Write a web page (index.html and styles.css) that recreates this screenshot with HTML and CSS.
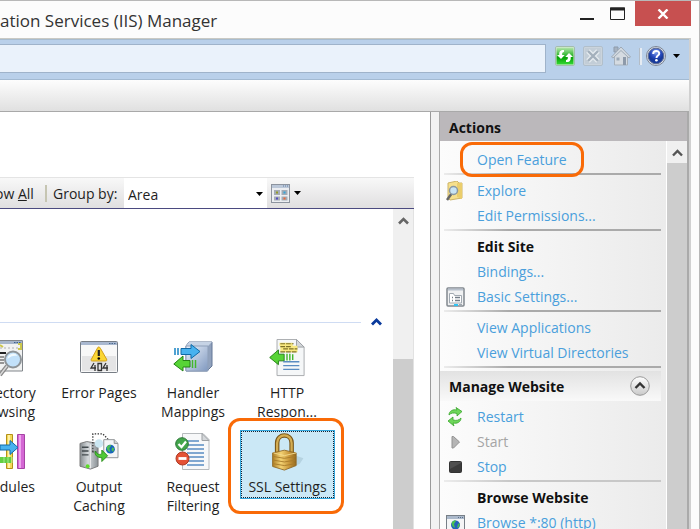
FILE: index.html
```html
<!DOCTYPE html>
<html lang="en">
<head>
<meta charset="utf-8">
<title>IIS Manager</title>
<link rel="stylesheet" href="styles.css">
</head>
<body>
<div class="window">
  <header class="titlebar">
    <h1 class="title">ation Services (IIS) Manager</h1>
    <div class="window-buttons">
      <button class="win-btn" aria-label="Minimize"><svg width="16" height="14" viewBox="0 0 16 14"><path d="M1 12h14" stroke="#222" stroke-width="2"/></svg></button>
      <button class="win-btn" aria-label="Maximize"><svg width="16" height="14" viewBox="0 0 16 14"><path d="M.5 1h14v11.500h-14z" fill="none" stroke="#222"/><path d="M0 2h15" stroke="#222" stroke-width="3"/></svg></button>
      <button class="win-btn close" aria-label="Close"><svg width="12" height="10" viewBox="0 0 12 10"><path d="M1.500 .5l9 9M10.500 .5l-9 9" stroke="#fff" stroke-width="2.400"/></svg></button>
    </div>
  </header>

  <div class="frame">
    <div class="navbar">
      <input class="address" type="text" aria-label="Address">
      <div class="nav-icons">
        <button class="icon-btn" aria-label="Refresh"><svg width="20" height="20" viewBox="0 0 20 20"><defs><linearGradient id="gr" x2="0" y2="1"><stop stop-color="#b5e6ad"/><stop offset=".45" stop-color="#35b833"/><stop offset=".6" stop-color="#06a306"/><stop offset="1" stop-color="#35d935"/></linearGradient></defs><rect x=".5" y=".5" width="19" height="19" rx="1.500" fill="#dcebdc" stroke="#a3bcae"/><rect x="1.500" y="1.500" width="17" height="17" fill="url(#gr)"/><path d="M9 4C5 3.500 4 6 4.300 9H2l4 4 3.700-4H7.200C7 7 7.500 6.200 9 6zM11 16c4 .5 5-2 4.700-5H18l-4-4-3.700 4h2.500c.2 2-.3 2.800-1.800 3z" fill="#fff"/></svg></button>
        <button class="icon-btn" aria-label="Stop loading" disabled><svg width="20" height="20" viewBox="0 0 20 20"><rect x=".5" y=".5" width="19" height="19" rx="1.500" fill="#cbd4dc" stroke="#b1bfcb"/><path d="M2 2h16v16H2z" fill="#c2cdd7"/><path d="M5 5l10 10M15 5L5 15" stroke="#e4eaef" stroke-width="5"/><path d="M5 5l10 10M15 5L5 15" stroke="#a3b0bc" stroke-width="2.400"/></svg></button>
        <button class="icon-btn" aria-label="Home"><svg width="20" height="20" viewBox="0 0 20 20"><path d="M3 1h4v5H3z" fill="#a7b3c1" stroke="#8d9bab"/><path d="M3.500 10v9h13v-9L10 3z" fill="#d5dbe1" stroke="#a7b1bb"/><path d="M10 1L.5 11l1.500 1 8-7.500L18 12l1.500-1z" fill="#d3dae1" stroke="#9faab6"/><path d="M12 11h3v8h-3z" fill="#8d9aaa"/><path d="M5.500 11.500h3v3h-3z" fill="#9ba8b7"/></svg></button>
        <span class="nav-sep"></span>
        <button class="help-btn" aria-label="Help"><svg width="32" height="20" viewBox="0 0 32 20"><defs><radialGradient id="hb" cx=".5" cy=".25"><stop stop-color="#86a5f0"/><stop offset=".7" stop-color="#2749bd"/><stop offset="1" stop-color="#173a9c"/></radialGradient></defs><circle cx="10" cy="10" r="9.500" fill="#d8dee8" stroke="#7c8593"/><circle cx="10" cy="10" r="7.800" fill="url(#hb)" stroke="#5d6c93"/><path d="M7.200 8c0-4 6-4 6-.6 0 2.200-2.700 2.200-2.700 4.600" fill="none" stroke="#fff" stroke-width="2"/><circle cx="10.400" cy="14.300" r="1.300" fill="#fff"/></svg><svg width="7" height="4" viewBox="0 0 7 4"><path d="M0 0h7L3.500 4z" fill="#000"/></svg></button>
      </div>
    </div>
    <div class="strip"></div>

    <div class="panes">
      <main class="features">
        <div class="view-bar">
          <button class="show-all">ow <u>A</u>ll</button>
          <span class="bar-sep"></span>
          <label class="group-label" for="group-by">Group by:</label>
          <div class="select-wrap">
            <select class="group-select" id="group-by"><option>Area</option></select>
            <svg class="select-arrow" width="7" height="4" viewBox="0 0 7 4"><path d="M0 0h7L3.500 4z" fill="#000"/></svg>
          </div>
          <button class="view-btn" aria-label="View"><svg width="19" height="19" viewBox="0 0 19 19"><rect x=".5" y=".5" width="18" height="18" fill="#eceef2" stroke="#8d949f"/><path d="M1 1h17v3H1z" fill="#bcc8d9"/><path d="M12 2h5" stroke="#5c7da3" stroke-dasharray="1 1"/><path d="M3 6h6v5H3zM10.500 6h6v5h-6zM3 12.500h6v4H3zM10.500 12.500h6v4h-6z" fill="#a4abb5"/><path d="M5 7.500h2v2H5z" fill="#939c28"/><path d="M12.500 7.500h2v2h-2z" fill="#35a6dc"/><path d="M5 13.500h2v2H5z" fill="#544cc4"/><path d="M12.500 13.500h2v2h-2z" fill="#f06835"/></svg><svg width="7" height="4" viewBox="0 0 7 4"><path d="M0 0h7L3.500 4z" fill="#000"/></svg></button>
        </div>
        <div class="list-area">
          <div class="list">
            <div class="group-head">
              <span class="group-line"></span>
              <button class="collapse" aria-label="Collapse group"><svg width="11" height="8" viewBox="0 0 11 8"><path d="M1 6.500L5.500 2 10 6.500" fill="none" stroke="#0a3a9c" stroke-width="2.800"/></svg></button>
            </div>
            <div class="grid">
              <a class="tile cut" href="#"><svg width="24" height="38" viewBox="8 0 24 38"><path d="M0 1.500h30.500V32H0z" fill="#f1f2f2" stroke="#81868b"/><path d="M0 2h30v3H0z" fill="#a6b5ca"/><path d="M22 3.500h7" stroke="#385d8b" stroke-dasharray="1.500 1"/><path d="M8 6l3 2M26 5h3v5h-3" stroke="#ccc74c" stroke-width="2" fill="none"/><path d="M8 9h20" stroke="#b0b0b0" stroke-dasharray="2 2"/><path d="M8 14h6" stroke="#222" stroke-width="2"/><path d="M8 18h4M8 21h4M8 24h4" stroke="#777" stroke-width="1.500"/><path d="M15 27l-7 9" stroke="#888" stroke-width="4"/><path d="M15 27l-7 9" stroke="#d9d9d9" stroke-width="1.500"/><circle cx="21" cy="20.500" r="8" fill="#c2e1fa" stroke="#8e9498" stroke-width="2"/><path d="M15.500 20a5.500 5.500 0 0 1 10-3c-3-1-7 0-10 3z" fill="#f1faff"/></svg><span>ectory<br>wsing</span></a>
              <a class="tile" href="#"><svg width="38" height="38" viewBox="0 0 38 38"><rect x=".5" y="2.500" width="37" height="31" rx="1" fill="#f8f8f8" stroke="#777d85"/><path d="M1 3h36v3H1z" fill="#a9b8d0"/><path d="M29 4.500h7" stroke="#49688d" stroke-dasharray="1.500 1"/><path d="M2 17h34v15H2z" fill="#e4e4e5"/><path d="M18.500 8c1 0 1.500.5 2 1.500l6 10.500c.8 1.500 0 2-1 2h-13c-1.500 0-2-.8-1-2l6-11c.3-.6.6-1 1-1z" fill="#fbd633" stroke="#d09e1b"/><path d="M18.800 11v6" stroke="#222" stroke-width="2.200"/><circle cx="18.800" cy="19.500" r="1.300"/><path d="M14 24l-3 5h5m-1-3v6M18 24.500h3.500v7H18zM26 24l-3 5h5m-1-3v6" fill="none" stroke="#333" stroke-width="1.300"/></svg><span>Error Pages</span></a>
              <a class="tile" href="#"><svg width="40" height="38" viewBox="0 0 40 38"><defs><linearGradient id="cube" x2="1" y2="1"><stop stop-color="#e9f0fa"/><stop offset="1" stop-color="#7f98bf"/></linearGradient></defs><path d="M13 7l3-4h23v24l-5 5H13z" fill="#91a2bd" stroke="#627696"/><path d="M13 7l3-4h23l-4 4z" fill="#c6d3e5"/><path d="M13 7h22v25H13z" fill="url(#cube)" stroke="#8e9fb9"/><path d="M2 9v7M5 9v7" stroke="#1683c4" stroke-width="1.500"/><path d="M8 9.500h10V5.500l9 7-9 7v-4H8z" fill="#48b2ef" stroke="#126aa7"/><path d="M17 21.500h-7v-4.500L.8 25l9.200 7v-4h7z" fill="#57d436" stroke="#258217"/><path d="M19.500 21v8M22.500 21v8" stroke="#43b72d" stroke-width="1.500"/></svg><span>Handler<br>Mappings</span></a>
              <a class="tile" href="#"><svg width="38" height="40" viewBox="0 0 38 40"><path d="M8.500 .5H29l8 8v30H8.500z" fill="#f5f7f8" stroke="#a7aaad"/><path d="M29 .5v8h8z" fill="#d3d6d9" stroke="#9b9fa3"/><path d="M11 4h14v3H11zM12 7h18v7H12z" fill="#f8e980"/><path d="M12 5h14M12 8h12M15 10.500h15M12 13.500h18" stroke="#7e7127" stroke-width="1.300" stroke-dasharray="5 1"/><path d="M16 16h-6v-4.500L.8 19.500 10 27v-4h6z" fill="#57d436" stroke="#258217"/><path d="M19 15.500v7M22 15.500v7M25 16v6" stroke="#43b72d" stroke-width="1.500"/><path d="M15 24h17M15 28h17M15 32h17" stroke="#5a8cc2" stroke-width="1.500"/></svg><span>HTTP<br>Respon...</span></a>
              <a class="tile cut" href="#"><svg width="26" height="38" viewBox="0 0 26 38"><path d="M6.500 1.500h6v34h-6z" fill="#f2d959" stroke="#b59118"/><path d="M9 2v33" stroke="#fff0a3" stroke-width="2"/><path d="M17.500 1.500h7v34h-7z" fill="#d467d4" stroke="#a544a4"/><path d="M20 2v33" stroke="#eda6ed" stroke-width="2"/><path d="M0 12h10V7.500l8 7-8 7V17H0z" fill="#48b2ef" stroke="#126aa7"/><path d="M0 24h11v6H0z" fill="#63cf43"/><path d="M4 24v6M8 24v6M12 24v6" stroke="#a4e88e"/></svg><span>dules</span></a>
              <a class="tile" href="#"><svg width="42" height="40" viewBox="0 0 42 40"><defs><linearGradient id="srv"><stop stop-color="#868c90"/><stop offset=".45" stop-color="#d5d9dc"/><stop offset="1" stop-color="#8a9195"/></linearGradient></defs><path d="M1 11l7-2 12 2v24l-8 3-11-3z" fill="url(#srv)" stroke="#777"/><path d="M3 15h7M3 19h7M3 23h7" stroke="#434a4e" stroke-width="1.500"/><path d="M12 12v25" stroke="#eee"/><circle cx="9" cy="35" r="2" fill="#5ddb29"/><path d="M14.500 20V1H25l6 6M14 20h5" fill="none" stroke="#333" stroke-width="1.300" stroke-dasharray="1.500 1.500"/><circle cx="21" cy="11" r="4.500" fill="#cbe7f2"/><path d="M26 7h11l4 4v15H26z" fill="#f4f5f6" stroke="#8e9295"/><path d="M37 7v4h4" fill="#d3d3d3" stroke="#8e9295"/><circle cx="33" cy="17" r="4.700" fill="#1764bd"/><path d="M29 15c2-3 4-3 5-2l-2 3 1 4c-2 0-4-2-4-5zM35 15l2 1-1 4-2-2z" fill="#48bd55"/><path d="M17 19c2 4 5 4 7 3v-4l6 6-6 6v-4c-5 0-8-3-7-7z" fill="#4fc936" stroke="#2a8f1c"/></svg><span>Output<br>Caching</span></a>
              <a class="tile" href="#"><svg width="36" height="38" viewBox="0 0 36 38"><path d="M7.500 .5H28l6 6v30H7.500z" fill="#f7f8f9" stroke="#b6babd"/><path d="M27 .5v7h7z" fill="#d5d8db" stroke="#9da1a4"/><path d="M12 8h12M12 12h17M12 16h17M12 20h17M12 24h17M12 28h17M12 32h17" stroke="#5a8cc2" stroke-width="1.500"/><circle cx="7" cy="11" r="6.300" fill="#42a54b" stroke="#2b7535"/><path d="M3.500 11l3 3L11 8.500" fill="none" stroke="#fff" stroke-width="2.200"/><circle cx="7.500" cy="25.500" r="6.500" fill="#e45135" stroke="#ad3822"/><path d="M3.500 25.500h8" stroke="#fff" stroke-width="2.800"/></svg><span>Request<br>Filtering</span></a>
              <a class="tile selected" href="#"><svg width="38" height="42" viewBox="0 0 38 42"><defs><linearGradient id="gold"><stop stop-color="#ac7d24"/><stop offset=".35" stop-color="#f3d273"/><stop offset=".7" stop-color="#c9973a"/><stop offset="1" stop-color="#94691e"/></linearGradient></defs><path d="M27 25l9 3-4 6-11 5z" fill="#9fbdcb" opacity=".5"/><path d="M7 22V11c0-11 16-11 16 0v11" fill="none" stroke="#7b581b" stroke-width="5"/><path d="M7 22V11c0-11 16-11 16 0v11" fill="none" stroke="#d4ad52" stroke-width="2.500"/><path d="M2 22l13-3 13 3v14l-13 5-13-4z" fill="url(#gold)" stroke="#916a27"/><path d="M3 26l12 2 12-2M3 30l12 2 12-2M3 34l12 2 12-2" fill="none" stroke="#a87b2a"/><path d="M3 22l12 3 13-3" fill="none" stroke="#f5db8f"/></svg><span>SSL Settings</span></a>
            </div>
          </div>
          <div class="scrollbar">
            <div class="scroll-up"><svg width="11" height="9" viewBox="0 0 11 9"><path d="M1 7.500L5.500 3 10 7.500" fill="none" stroke="#666" stroke-width="2.600"/></svg></div>
            <div class="thumb list-thumb"></div>
          </div>
        </div>
      </main>

      <aside class="actions">
        <h2 class="actions-title">Actions</h2>
        <div class="actions-body">
          <div class="actions-list">
            <div class="row"><span class="ico"></span><a class="ringed" href="#">Open Feature</a></div>
            <hr>
            <div class="row"><span class="ico"><svg width="18" height="20" viewBox="0 0 18 20"><path d="M2 2l9-2 2 2h3v15L4 19l-2-2z" fill="#f6e08c" stroke="#cdb468"/><path d="M11 2h5v16l-5-2z" fill="#ebce6c"/><path d="M6 12l-5 7" stroke="#666" stroke-width="2.500"/><circle cx="7.500" cy="9.500" r="4" fill="#c8e4f4" stroke="#8b98a0" stroke-width="1.500"/></svg></span><a href="#">Explore</a></div>
            <div class="row"><span class="ico"></span><a href="#">Edit Permissions...</a></div>
            <hr>
            <div class="row"><span class="ico"></span><h3>Edit Site</h3></div>
            <div class="row"><span class="ico"></span><a href="#">Bindings...</a></div>
            <div class="row"><span class="ico"><svg width="19" height="20" viewBox="0 0 19 20"><rect x="1" y="1" width="17" height="18" rx="1" fill="#f0f1f2" stroke="#81888f" stroke-width="1.500"/><path d="M2 2.500h15" stroke="#b8c1cc" stroke-width="2"/><path d="M3.500 6.500h4l1 2h7V16h-12z" fill="#fff" stroke="#a1a9b1"/><path d="M6 10.500h1M9 10.500h5M6 13.500h1M9 13.500h5" stroke="#737d87" stroke-width="1.300"/><path d="M8 18h4" stroke="#31c2f1" stroke-width="2"/><path d="M13 18h3" stroke="#a0a7ad" stroke-width="2"/></svg></span><a href="#">Basic Settings...</a></div>
            <hr>
            <div class="row"><span class="ico"></span><a href="#">View Applications</a></div>
            <div class="row"><span class="ico"></span><a href="#">View Virtual Directories</a></div>
            <hr>
            <div class="section"><h3>Manage Website</h3><button class="round" aria-label="Collapse section"><svg width="20" height="20" viewBox="0 0 20 20"><defs><linearGradient id="rd" x2="0" y2="1"><stop stop-color="#fff"/><stop offset="1" stop-color="#c9c9c9"/></linearGradient></defs><circle cx="10" cy="10" r="9.300" fill="url(#rd)" stroke="#999"/><path d="M5.500 12L10 7.500l4.500 4.500" fill="none" stroke="#333" stroke-width="2.400"/></svg></button></div>
            <div class="row"><span class="ico"><svg width="18" height="20" viewBox="0 0 18 20"><path d="M3 8c0-4 4-6 8-5l-1-2.500 6 4L11 9V6.500C7 5.500 5 6 3 8z" fill="#6ed65a" stroke="#37a62b" stroke-width=".8"/><path d="M15 11c0 4-4 6-8 5l1 3-6-5 5-4v3c4 1 6 0 8-2z" fill="#6ed65a" stroke="#37a62b" stroke-width=".8"/></svg></span><a href="#">Restart</a></div>
            <div class="row"><span class="ico"><svg width="18" height="20" viewBox="0 0 18 20"><path d="M6 4.500h1.500l6 5.500-6 6H6z" fill="#b5b5b5" stroke="#929292"/></svg></span><span class="disabled">Start</span></div>
            <div class="row"><span class="ico"><svg width="18" height="20" viewBox="0 0 18 20"><rect x="3.500" y="4.500" width="12" height="11" rx="1" fill="#4f4f4f" stroke="#333"/><path d="M4 12l11-6v9H4z" fill="#3b3b3b"/></svg></span><a href="#">Stop</a></div>
            <hr class="light">
            <div class="row"><span class="ico"></span><h3>Browse Website</h3></div>
            <div class="row"><span class="ico"><svg width="19" height="20" viewBox="0 0 19 20"><rect x=".5" y="2.500" width="18" height="17" fill="#f4f5f6" stroke="#777f87"/><path d="M1 3h17v3H1z" fill="#abb9cb"/><path d="M12 4.500h5" stroke="#5a6f89" stroke-dasharray="1 1"/><circle cx="9.500" cy="12" r="4.500" fill="#2462bd"/><path d="M6 9c2-2 4-2 4-1l-2 3 1 4c-2-1-4-3-3-6zM12 11l2-1-1 4-2 1z" fill="#48c052"/></svg></span><a href="#">Browse *:80 (http)</a></div>
          </div>
          <div class="scrollbar">
            <div class="scroll-up"><svg width="11" height="9" viewBox="0 0 11 9"><path d="M1 7.500L5.500 3 10 7.500" fill="none" stroke="#555" stroke-width="2.400"/></svg></div>
            <div class="thumb"></div>
          </div>
        </div>
      </aside>
    </div>
  </div>
</div>
</body>
</html>
```

FILE: styles.css
```css
* { box-sizing: border-box; }

body {
  margin: 0;
  font-family: "Open Sans", "Noto Sans", sans-serif;
  font-size: 14px;
  line-height: 19px;
  color: #1e1e1e;
  overflow: hidden;
}

button {
  border: 0;
  padding: 0;
  background: none;
  font: inherit;
  color: inherit;
}

svg { display: block; flex: none; }
a { text-decoration: none; }
h1, h2, h3 { margin: 0; font-size: inherit; }

.window {
  display: flex;
  flex-direction: column;
  height: 100vh;
  padding-right: 8px;
  background: #fcfcfc;
  border-top: 1px solid #b8b8b8;
  border-right: 1px solid #b8b8b8;
}

/* Title bar */
.titlebar {
  display: flex;
  flex: none;
  justify-content: space-between;
  height: 37px;
}

.title {
  font-size: 17px;
  font-weight: 400;
  line-height: 39px;
  white-space: nowrap;
  color: #333;
}

.window-buttons { display: flex; gap: 15px; }
.win-btn { height: 25px; display: flex; align-items: center; }
.close {
  width: 56px;
  justify-content: center;
  margin-left: -6px;
  background: #c75050;
}

.frame {
  display: flex;
  flex-direction: column;
  flex: 1;
  min-height: 0;
  border-top: 1px solid #c9c9c4;
  border-right: 2px solid #d0d0d0;
}

/* Navigation */
.navbar {
  display: flex;
  flex: none;
  align-items: center;
  gap: 9px;
  height: 41px;
  padding-right: 9px;
  background: #b9d0ea;
  border-top: 1px solid #a8bccf;
  border-bottom: 1px solid #a3bad2;
}

.address {
  flex: 1;
  min-width: 0;
  height: 29px;
  margin-bottom: 2px;
  padding: 0 8px;
  border: 1px solid #9fb3ca;
  border-left: 0;
  background: #eaf2fb;
  font: inherit;
}

.nav-icons { display: flex; align-items: center; gap: 8px; margin-bottom: 7px; }
.nav-sep { width: 3px; height: 17px; background: #e5ebf2; border-left: 1px solid #b3bcc6; }
.help-btn { display: flex; align-items: center; margin-left: -4px; }
.help-btn svg:first-child { margin-right: -5px; }

.strip {
  flex: none;
  height: 32px;
  background: linear-gradient(#fdfdfd, #e0e0e0);
  border-bottom: 1px solid #a9a9a9;
}

/* Panes */
.panes { display: flex; flex: 1; min-height: 0; background: #f2f2f2; }

.features {
  display: flex;
  flex-direction: column;
  flex: 1;
  min-width: 0;
  padding: 65px 16px 0 0;
  background: #fff;
  border-right: 1px solid #999;
}

.view-bar {
  display: flex;
  flex: none;
  align-items: center;
  height: 32px;
  background: linear-gradient(#f8f8f8, #e0dfe0);
  border-top: 1px solid #e4e4e4;
  border-bottom: 1px solid #4b4a80;
}

.show-all { margin-left: -5px; width: 39px; text-align: left; white-space: nowrap; }
.bar-sep { width: 2px; height: 17px; margin: 0 6px 0 11px; background: #c6c5b2; }
.group-label { width: 71px; white-space: nowrap; }
.select-wrap { position: relative; align-self: stretch; flex: 1; background: #fff; }
.group-select {
  width: 100%;
  height: 100%;
  padding: 2px 4px 0;
  border: 0;
  background: #fff;
  appearance: none;
  font: inherit;
  color: inherit;
}
.select-arrow { position: absolute; right: 4px; top: 14px; }
.view-btn { display: flex; align-items: center; gap: 4px; padding: 0 113px 0 4px; }

.list-area { display: flex; flex: 1; min-height: 0; border-right: 1px solid #e2e2e2; }
.list { flex: 1; min-width: 0; padding-top: 107px; }
.group-head { display: flex; align-items: center; gap: 10px; padding-right: 11px; height: 12px; }
.group-line { flex: 1; height: 1px; background: #cfdcf3; }

.grid {
  display: grid;
  grid-template-columns: 52px repeat(3, 94px);
  grid-auto-rows: 94px;
  padding-top: 9px;
}

.tile {
  position: relative;
  display: flex;
  flex-direction: column;
  align-items: center;
  gap: 6px;
  padding-top: 2px;
  color: #1e1e1e;
  text-align: center;
  white-space: nowrap;
}
.tile svg { height: 38px; }
.tile.cut { align-items: flex-start; }
.tile.cut span { width: 40px; margin-left: -5px; text-align: right; }

.tile.selected {
  align-self: start;
  height: 67px;
  margin: 0 0 0 1px;
  background: #cbe8f6;
  border: 1px dotted #123;
  outline: 1px solid #35a7dd;
  padding-top: 1px;
}
.tile.selected::after,
.ringed::after {
  content: "";
  position: absolute;
  border: 3px solid #f96a07;
  border-radius: 12px;
}
.tile.selected::after { inset: -14px -11px -17px -14px; }

/* Scrollbars */
.scrollbar { flex: none; width: 20px; display: flex; flex-direction: column; background: #f0f0f0; }
.scroll-up { display: flex; align-items: center; justify-content: center; height: 22px; }
.thumb { flex: 1; background: #cdcdcd; }
.list-thumb { margin-top: 128px; }

/* Actions */
.actions {
  display: flex;
  flex-direction: column;
  flex: none;
  width: 250px;
  margin-left: 8px;
  border-left: 1px solid #aaa;
  border-right: 2px solid #aaa;
}

.actions-title {
  flex: none;
  height: 29px;
  padding-left: 9px;
  line-height: 31px;
  background: #bbb8bb;
  color: #111;
}

.actions-body { display: flex; flex: 1; min-height: 0; overflow: hidden; }
.actions-list {
  flex: 1;
  min-width: 0;
  padding: 6px 5px 0 4px;
  background: linear-gradient(90deg, #fcfcfc, #ebebeb);
  border-right: 1px solid #fff;
}

.row { display: flex; align-items: center; gap: 11px; height: 25px; padding-left: 2px; white-space: nowrap; }
.row a { color: #4a9fdc; }
.row h3, .section h3 { color: #111; }
.ico { flex: none; width: 20px; }
.row .disabled { color: #a5a5a5; }
.ringed { position: relative; }
.ringed::after { inset: -8px -17px; }

hr {
  height: 2px;
  margin: 1px 0 3px;
  border: 0;
  background: linear-gradient(90deg, #ececec, #aaa 30%, #aaa);
}
.light { background: linear-gradient(90deg, #ececec, #c8c8c8 30%, #c8c8c8); }

.section {
  display: flex;
  align-items: center;
  justify-content: space-between;
  height: 30px;
  margin: 0 0 3px -4px;
  padding: 0 11px 0 9px;
  background: linear-gradient(#e2e2e2, #f9f9f9);
}
```
